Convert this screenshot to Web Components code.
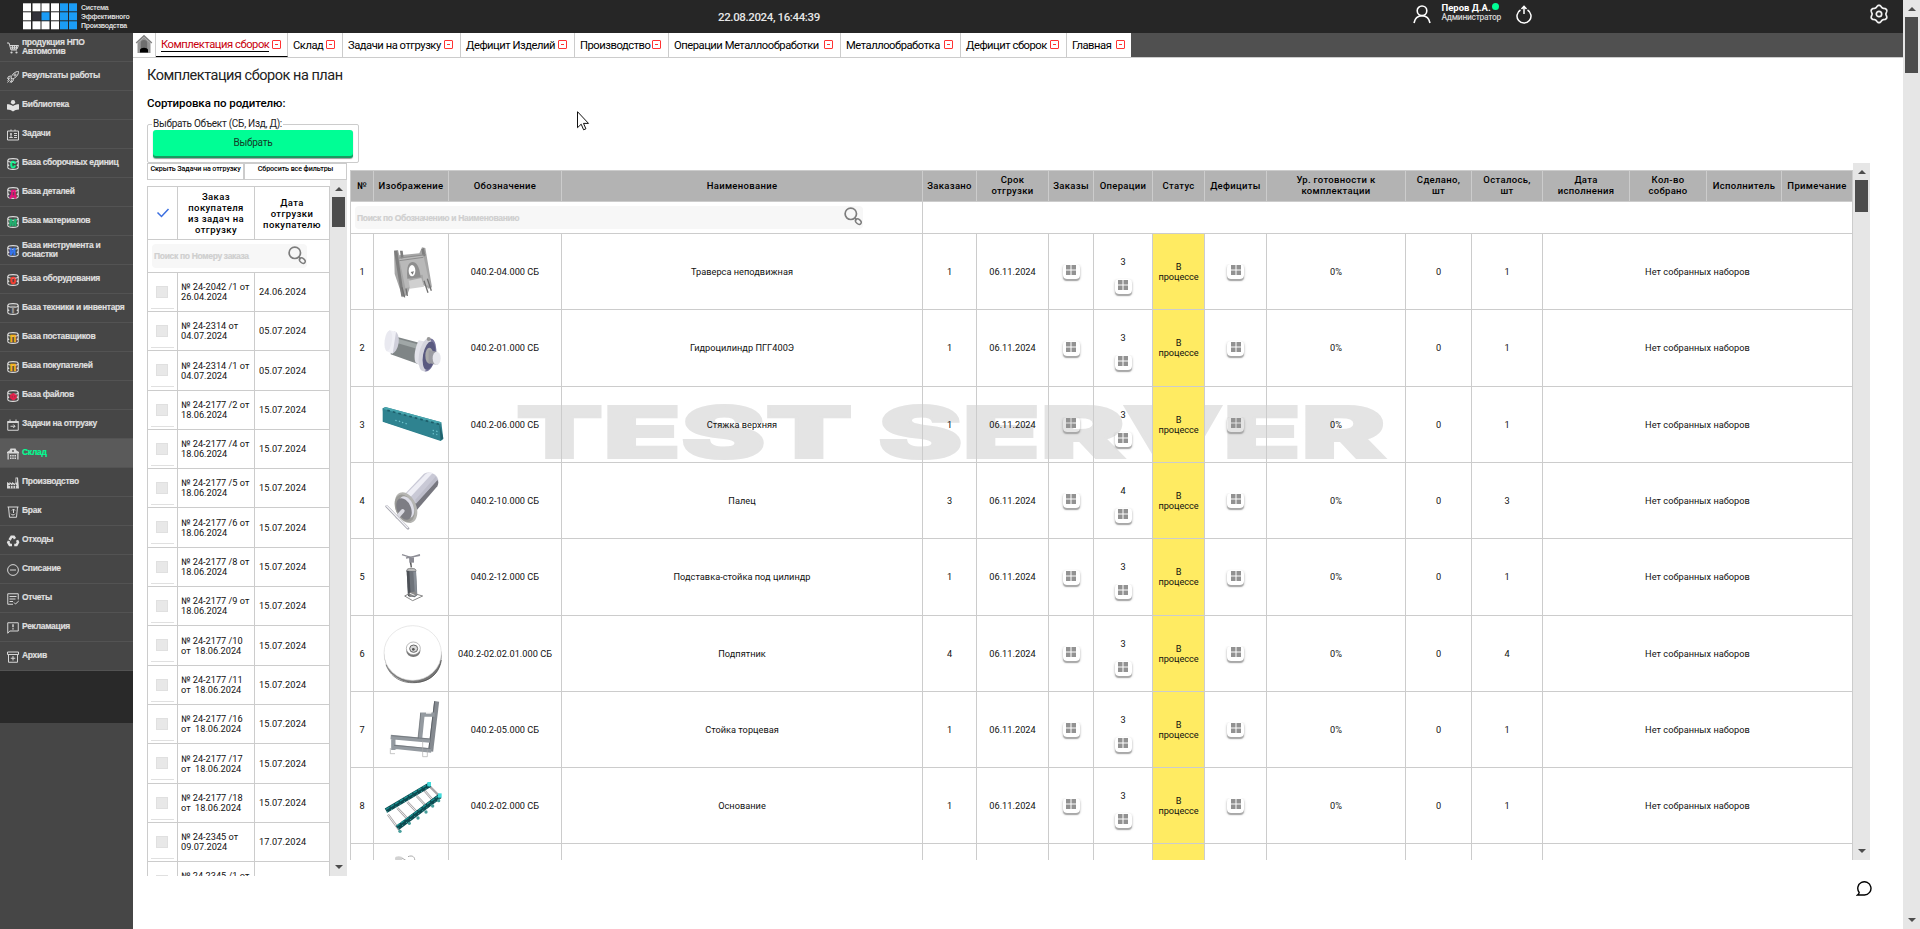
<!DOCTYPE html>
<html lang="ru">
<head>
<meta charset="utf-8">
<title>Комплектация сборок на план</title>
<style>
html,body{margin:0;padding:0;height:929px;overflow:hidden;background:#fff;font-family:Roboto,"Liberation Sans",sans-serif}
</style>
</head>
<body>
<erp-app></erp-app>
<script>
const define=(name,render)=>customElements.define(name,class extends HTMLElement{
  connectedCallback(){
    if(this.shadowRoot)return;
    this.attachShadow({mode:'open'}).innerHTML=render(this);
  }
});

/* ---------- icons ---------- */
const S='fill="none" stroke="#d6d6d6" stroke-width="2"';
const db=(c,l)=>`<g fill="none" stroke="#dcdcdc" stroke-width="2.2"><ellipse cx="12" cy="5" rx="10.4" ry="3.8"/><path d="M1.6 5v14c0 5 20.800 5 20.800 0V5M1.600 12c0 1.500 1.500 2.500 3 3M22.400 12c0 1.500-1.500 2.500-3 3"/></g><text x="12" y="19" font-family="Roboto,sans-serif" font-weight="900" font-size="17" text-anchor="middle" fill="${c}" stroke="${c}" stroke-width=".8">${l}</text>`;
const ICONS={
  cart:`<path ${S} d="M0 2h4l4 14h12M6 7h17l-3 7H8"/><path ${S} stroke-width="1.500" d="M7 10.500h14M11 7v7M15 7v7M19 7v7"/><circle cx="9" cy="21" r="2.200" fill="#d6d6d6"/><circle cx="19" cy="21" r="2.200" fill="#d6d6d6"/>`,
  rocket:`<path ${S} d="M8 14C10 6 16 1 23 1c0 7-5 13-13 15zM8 10L3 11l-2 4 6-1M13 15l-1 5-4 3 1-6"/><circle cx="16" cy="8" r="2.200" ${S} stroke-width="1.500"/><path ${S} d="M6 17l-5 6M4 16l-3 3M8 20l-2 3"/>`,
  reader:`<g fill="#e2e2e2"><circle cx="12" cy="4.500" r="4.300"/><path d="M12 12C9 9.500 5 8.500 0 8.500V19c5 0 9 1.500 12 4 3-2.500 7-4 12-4V8.500c-5 0-9 1-12 3.500z"/></g>`,
  tasks:`<path ${S} d="M1 4h22v18H1zM8 1v3M16 1v3"/><circle cx="8" cy="10" r="2" fill="#d6d6d6"/><path ${S} d="M4.500 17h7M14 9h6M14 13h6M14 17h6M8 11v5"/>`,
  dbS:db('#0ef596','С'),dbD:db('#e4127c','Д'),dbM:db('#21b573','М'),dbI:db('#3478f0','И'),dbO:db('#fb4030','О'),dbT:db('#9c9c9c','Т'),dbP:db('#f3b21b','П'),dbF:db('#e71e4b','Ф'),
  cal:`<path ${S} d="M1.500 5h21v17.500h-21zM6 1v4M18 1v4"/><path fill="#d6d6d6" d="M1 4h22v4H1z"/><path ${S} d="M7 14.500h9M12.500 11l3.500 3.500-3.500 3.500"/>`,
  ware:`<g fill="#d9d9d9"><path d="M0 8l5-3 2-4h10l2 4 5 3v3H0z"/><path d="M1 11h2.500v12H1zM20.500 11H23v12h-2.500zM6 14h3v3H6zM10.500 14h3v3h-3zM15 14h3v3h-3zM6 19h3v3H6zM10.500 19h3v3h-3zM15 19h3v3h-3z"/></g><circle cx="12" cy="6" r="2" fill="#5a5a5a"/>`,
  factory:`<path fill="#d6d6d6" d="M0 23V10l5 3v-3l5 3v-3l5 3h2V1h5l2 22z"/><path stroke="#464646" stroke-width="1.600" d="M3 17h16M7 14v9M12 14v9M17 14v9M19 3v8" fill="none"/>`,
  scrap:`<path ${S} stroke-width="2.400" d="M1 2h22M3 2l2 20.500h14L21 2"/><path ${S} d="M8 15.500a4.500 4.500 0 0 0 8 0M13 6v8M10 9l3-3 3 3"/>`,
  recycle:`<g fill="none" stroke="#e0e0e0" stroke-width="5"><path d="M5 10l4-6.500h4.500l2.500 4M20 10.500l2 4-3 5.500h-4.500M10 20H5.500L2.500 15l1.500-3"/></g>`,
  minus:`<circle cx="12" cy="12" r="10.800" ${S}/><path ${S} stroke-width="2.400" d="M6 12h12"/>`,
  report:`<path ${S} d="M22.500 13V1.500h-21v21H12M5 7h14M5 12h12M5 17h7M14 19l3 3 6.500-6"/>`,
  claim:`<path ${S} d="M1.500 22.500v-21h21v16.500h-17z"/><path stroke="#e6e6e6" stroke-width="2.600" d="M12 4.500v6M12 12.500v2.500"/>`,
  archive:`<path ${S} d="M1 2h22v5H1zM3 7v15.500h18V7"/><path ${S} stroke-width="2.400" d="M12 10v9M7.500 14.500h9"/>`
};
define('nav-icon',e=>`<style>:host{display:block;width:12px;height:12px}svg{display:block;overflow:visible}</style><svg width="12" height="12" viewBox="0 0 24 24">${ICONS[e.getAttribute('name')]}</svg>`);

define('search-icon',()=>`<style>:host{display:block;width:18px;height:19px}svg{display:block}</style>
<svg width="18" height="19" viewBox="0 0 18 19" fill="none" stroke="#7d7d7d"><circle cx="6.800" cy="6.800" r="5.700" stroke-width="1.700"/><path d="M10.700 10.800l2 2.400" stroke-width="1.700"/><ellipse cx="14.300" cy="14.600" rx="3.200" ry="2.200" transform="rotate(40 14.300 14.600)" stroke-width="1.500"/></svg>`);

define('scroll-bar',e=>`<style>:host{display:flex;flex-direction:column;align-items:center;width:17px;background:#e6e6e6;box-sizing:border-box}
i{display:block;border:solid transparent;border-width:0 4px}.u{border-bottom:4px solid #4d4d4d;margin:7px 0 6px}.d{border-top:4px solid #4d4d4d;margin:auto 0 7px}
.t{width:13px;background:#4d4d4d;height:${e.getAttribute('thumb')}px}</style><i class="u"></i><div class="t"></div><i class="d"></i>`);

/* ---------- header ---------- */
define('brand-logo',()=>{
  const xs=[0,9.5,18.5,28,37,46],W='#fff',B='#1b9cf5';
  const rows=[[W,W,W,W,B,B],[W,'#33333b',B,W,B,B],[W,W,W,W,B,B]];
  return `<style>:host{display:flex;align-items:center;padding:0 0 1px 23px}svg{display:block}
  div{margin-left:4px;font:bold 7px/9px "Liberation Sans",sans-serif;color:#dadada;letter-spacing:-.3px;white-space:nowrap}</style>
  <svg width="54" height="27">${rows.map((r,y)=>r.map((c,x)=>`<rect x="${xs[x]}" y="${y*9+.300}" width="8" height="8" fill="${c}"/>`).join('')).join('')}</svg><div>Система<br>Эффективного<br>Производства</div>`;
});
define('user-badge',()=>`<style>:host{display:flex;align-items:flex-start;height:33px;color:#fff}svg{display:block;margin-top:5px}
.t{margin:3px 16px 0 11px;width:58px;white-space:nowrap;font:bold 9.500px/10px Roboto,sans-serif;position:relative;letter-spacing:0}
.t small{display:block;font:500 8.500px/9px Roboto,sans-serif;color:#d2d2d2;letter-spacing:-.3px}
.t i{position:absolute;left:50px;top:0;width:7px;height:7px;border-radius:50%;background:#00fe95}</style>
<svg width="18" height="19" viewBox="0 0 18 19" fill="none" stroke="#fff" stroke-width="1.600"><circle cx="9" cy="5.800" r="4.800"/><path d="M1 18c.8-4.500 4-7.300 8-7.300s7.200 2.800 8 7.300"/></svg>
<div class="t">Перов Д.А.<small>Администратор</small><i></i></div>
<svg width="16" height="19" viewBox="0 0 16 19" fill="none" stroke="#fff" stroke-width="1.500"><path d="M4.500 5A7 7 0 1 0 11.500 5M8 9V1.500M5.500 4L8 1.300 10.500 4"/></svg>`);
define('app-header',()=>{
  const p=[];for(let i=0;i<96;i++){const a=i/96*Math.PI*2,r=7.8+.9*Math.cos(a*6);p.push((10+r*Math.sin(a)).toFixed(2)+','+(10-r*Math.cos(a)).toFixed(2))}
  return `<style>:host{display:grid;grid-template-columns:133px 1fr 1fr;height:33px;background:#262626;font-family:Roboto,sans-serif}
  .time{justify-self:start;margin-left:585px;font:500 11.500px/34px Roboto,sans-serif;color:#e6e6e6;white-space:nowrap;letter-spacing:-.38px}
  .r{display:flex;justify-content:space-between;padding:0 14px 0 394.500px}.g{margin-top:3.500px}</style>
  <brand-logo></brand-logo><div class="time">22.08.2024, 16:44:39</div>
  <div class="r"><user-badge></user-badge><svg class="g" width="20" height="20" viewBox="0 0 20 20" fill="none" stroke="#f2f2f2" stroke-width="1.700"><polygon points="${p.join(' ')}" stroke-linejoin="round"/><circle cx="10" cy="10" r="2.700"/></svg></div>`;
});

/* ---------- side navigation ---------- */
define('nav-item',e=>`<style>:host{display:flex;align-items:center;height:29px;box-sizing:border-box;padding:0 0 0 7px;background:#464646;border-bottom:1px solid #535353;color:#dedede}
:host([active]){background:#5a5a5a;color:#00fe95}
span{margin:0 0 1px 3px;font:bold 8.500px/9px "Liberation Sans",sans-serif;letter-spacing:-.3px;-webkit-text-stroke:.2px currentColor;white-space:pre-line}nav-icon{margin-top:1px}</style>
<nav-icon name="${e.getAttribute('icon')}"></nav-icon><span><slot></slot></span>`);
const NAV=[['cart','продукция НПО\nАвтомотив'],['rocket','Результаты работы'],['reader','Библиотека'],['tasks','Задачи'],['dbS','База сборочных единиц'],['dbD','База деталей'],['dbM','База материалов'],['dbI','База инструмента и\nоснастки'],['dbO','База оборудования'],['dbT','База техники и инвентаря'],['dbP','База поставщиков'],['dbP','База покупателей'],['dbF','База файлов'],['cal','Задачи на отгрузку'],['ware','Склад',1],['factory','Производство'],['scrap','Брак'],['recycle','Отходы'],['minus','Списание'],['report','Отчеты'],['claim','Рекламация'],['archive','Архив']];
define('side-nav',()=>`<style>:host{display:block;width:133px;background:#464646}.gap{height:52px;background:#292929}</style>
${NAV.map(n=>`<nav-item icon="${n[0]}"${n[2]?' active':''}>${n[1]}</nav-item>`).join('')}<div class="gap"></div>`);

/* ---------- tabs ---------- */
define('tab-item',e=>`<style>:host{display:flex;align-items:center;box-sizing:border-box;width:${e.getAttribute('w')}px;height:24px;background:#fff;border-right:1px solid #ccc;padding-left:5px;white-space:nowrap;font:400 11.200px/13px Roboto,sans-serif;color:#000;letter-spacing:-.46px}
:host([active]){color:#c8000c;border-bottom:1px solid #000}:host([active]) span{border-bottom:1px solid #000}
:host([last]){border-right:0}
i{flex:none;width:7px;height:7px;border:1px solid #f33;border-radius:1px;margin:-1px 7px 0 auto;display:flex;align-items:center;justify-content:center}i::after{content:"";width:3px;height:1px;background:#f33}:host([active]) i,:host([last]) i{margin-right:6px}</style><span><slot></slot></span><i></i>`);
define('tab-bar',()=>`<style>:host{display:flex;height:24px;background:#505050;border-bottom:1px solid #ccc}
.home{width:22px;background:#fff;border-right:1px solid #ccc;padding-top:1px}svg{display:block;margin-left:2px}</style>
<div class="home"><svg width="18" height="20" viewBox="0 0 18 20"><path d="M9 .8L17.300 8.500l-1 1L9 3 1.700 9.500l-1-1z" fill="#808080"/><path d="M9 3l6.500 6v10h-13V9z" fill="#949494"/><path d="M9 6a3.200 3.200 0 0 1 3.200 3.200V14H5.800V9.200A3.200 3.200 0 0 1 9 6z" fill="#6e6e6e"/><path d="M5 18.500V16c0-3 8-3 8 0v2.500z" fill="#000"/></svg></div>
${[['Комплектация сборок',132,'active'],['Склад',55],['Задачи на отгрузку',118],['Дефицит Изделий',114],['Производство',94],['Операции Металлообработки',172],['Металлообработка',120],['Дефицит сборок',106],['Главная',64,'last']].map(t=>`<tab-item w="${t[1]}" ${t[2]||''}>${t[0]}</tab-item>`).join('')}`);

/* ---------- orders panel ---------- */
define('pick-box',()=>`<style>:host{display:block;width:212px;height:40px;position:relative;font-family:Roboto,sans-serif}
.f{box-sizing:border-box;height:39px;border:1px solid #ccc;border-radius:2px;padding:5px}
.l{position:absolute;left:5px;top:-6px;padding:0 1px;background:#fff;font-size:10px;line-height:11px;white-space:nowrap;letter-spacing:-.27px;color:#222}
button{display:block;width:200px;height:28px;border:0;border-radius:3px;background:#00fe95;box-shadow:inset 0 -2px #189a61,0 1px 1px #999;font:400 10px/24px Roboto,sans-serif;padding:0 0 2px;color:#143a28;letter-spacing:-.25px}</style>
<div class="f"><button>Выбрать</button></div><div class="l">Выбрать Объект (СБ, Изд, Д):</div>`);
define('search-box',e=>`<style>:host{display:flex;align-items:center;justify-content:space-between;box-sizing:border-box;background:#f7f7f7;border-radius:4px;padding:0 1px 0 2px}
span{font:bold 8.500px/10px "Liberation Sans",sans-serif;color:#cfcfcf;white-space:nowrap;letter-spacing:-.32px;-webkit-text-stroke:.2px currentColor}search-icon{margin-top:-2px}</style><span><slot></slot></span><search-icon></search-icon>`);
const ORDERS=[['№ 24-2042 /1 от\n26.04.2024','24.06.2024'],['№ 24-2314 от\n04.07.2024','05.07.2024'],['№ 24-2314 /1 от\n04.07.2024','05.07.2024'],['№ 24-2177 /2 от\n18.06.2024'],['№ 24-2177 /4 от\n18.06.2024'],['№ 24-2177 /5 от\n18.06.2024'],['№ 24-2177 /6 от\n18.06.2024'],['№ 24-2177 /8 от\n18.06.2024'],['№ 24-2177 /9 от\n18.06.2024'],['№ 24-2177 /10\nот  18.06.2024'],['№ 24-2177 /11\nот  18.06.2024'],['№ 24-2177 /16\nот  18.06.2024'],['№ 24-2177 /17\nот  18.06.2024'],['№ 24-2177 /18\nот  18.06.2024'],['№ 24-2345 от\n09.07.2024','17.07.2024'],['№ 24-2345 /1 от\n09.07.2024','17.07.2024']];
const OH=[39,39,40,39,39,39,40,39,39,40,39,39,40,39,39,39];
define('orders-table',()=>`<style>:host{display:block;width:183px;height:690px;overflow:hidden;font-family:Roboto,sans-serif}
.r{display:grid;grid-template-columns:31px 77px 75px;grid-template-rows:100%}.r>*{box-sizing:border-box;border:solid #ccc;border-width:0 1px 1px 0;display:flex;align-items:center}.r>:first-child{border-left-width:1px}
.h{height:54px;font:500 9.500px/11px Roboto,sans-serif;letter-spacing:.4px;text-align:center}.h>*{border-top-width:1px;justify-content:center}
.s{box-sizing:border-box;height:33px;border:solid #ccc;border-width:0 1px 1px;padding:4px 0 0 4px}search-box{width:155px;height:24px}
.c{flex-direction:column;padding-top:13px}.c i{width:10px;height:10px;margin-left:-1px;background:#e8e8e8;border:1px solid #e0e0e0}.c b{width:23px;height:1px;background:#e0e0e0;margin:10px 0 0}
.o,.d{font-size:9.200px;line-height:10px;white-space:pre;color:#111}.r>.o{padding:0 0 0 3px}.r>.d{padding:0 0 0 4px;letter-spacing:.1px}</style>
<div class="r h"><div><svg width="14" height="12" viewBox="0 0 14 12"><path d="M1.500 5.500l4 4L12.500 2" fill="none" stroke="#3b6fe0" stroke-width="1.500"/></svg></div><div>Заказ<br>покупателя<br>из задач на<br>отгрузку</div><div>Дата<br>отгрузки<br>покупателю</div></div>
<div class="s"><search-box>Поиск по Номеру заказа</search-box></div>
${ORDERS.map((o,i)=>`<div class="r" style="height:${OH[i]}px"><div class="c"><i></i><b></b></div><div class="o">${o[0]}</div><div class="d">${o[1]||'15.07.2024'}</div></div>`).join('')}`);
define('orders-panel',()=>`<style>:host{display:block;width:200px;font-family:Roboto,sans-serif}
.b{display:flex;height:17px}.b button{box-sizing:border-box;height:17px;width:97px;border:1px solid #ccc;background:#fff;padding:0;margin:0;font:500 7.200px/9px Roboto,sans-serif;letter-spacing:-.12px;color:#000;white-space:nowrap;display:flex;justify-content:center;align-items:flex-start}.b button+button{width:103px;border-left-width:1px}
.p{display:flex;height:696px}orders-table{margin-top:6px}</style>
<div class="b"><button>Скрыть Задачи на отгрузку</button><button>Сбросить все фильтры</button></div>
<div class="p"><orders-table></orders-table><scroll-bar thumb="30"></scroll-bar></div>`);

/* ---------- part pictures: drawn in a 225×228 box ---------- */
const ART=[
`<path d="M60 50l12-2 4 16 60-6 8-18 10 2 20 118-10 4-12-10-44 6-8 22-14 8L62 120z" fill="#a6a6a6"/><path d="M60 50l10 0 20 136-8 2zM78 50l8 0 4 30-8 2zM142 46l8-4 4 24-8 2z" fill="#7e7e7e"/><path d="M76 74l72-10 20 90-18 2-4-34-40 6 4 32-16 2z" fill="#b9b9b9"/><path d="M76 72l80-10M76 80l72-10" stroke="#8d8d8d" stroke-width="3" fill="none"/><path d="M100 134c-4-40 6-50 16-50s20 10 24 46z" fill="#8e8e8e"/><ellipse cx="114" cy="110" rx="10" ry="17" fill="#fff"/><path d="M110 114l10-2-4 10z" fill="#777"/><path d="M104 140l38-8 8 26-42 6z" fill="#d0d0d0"/><path d="M84 160l8 30M96 164l4 22M150 140l12 36M160 134l12 36" stroke="#707070" stroke-width="4" fill="none"/>`,
`<path d="M56 74l96 26-18 60-84-30z" fill="#7f8586"/><path d="M60 80l88 24-4 14-88-26z" fill="#a0a7a7"/><ellipse cx="58" cy="94" rx="16" ry="33" transform="rotate(8 58 94)" fill="#cfcfda"/><path d="M46 57l20 6-10 65-20-8z" fill="#f0f0f6"/><ellipse cx="43" cy="89" rx="11" ry="31" transform="rotate(8 43 89)" fill="#e9e9f0"/><path d="M134 88l30 6-14 80-26-20c-6-20 0-44 10-66z" fill="#e3e3ea"/><ellipse cx="162" cy="132" rx="24" ry="50" transform="rotate(10 162 132)" fill="#77759c"/><ellipse cx="155" cy="132" rx="20" ry="49" transform="rotate(10 155 132)" fill="#d4d4dd"/><ellipse cx="165" cy="134" rx="18" ry="43" transform="rotate(10 165 134)" fill="#5a5a80"/><ellipse cx="166" cy="134" rx="12" ry="24" fill="#aaa"/><path d="M164 118l26 4v40l-26-6z" fill="#9b9ba2"/><ellipse cx="188" cy="142" rx="12" ry="20" fill="#e6e6ec"/><circle cx="164" cy="84" r="6" fill="#999"/>`,
`<path d="M26 64l8-4 168 46 6 50-8 6-174-58z" fill="#2c7f8b"/><path d="M26 64l170 48 4 48-170-56z" fill="#2f8390"/><path d="M34 60l168 46-4 6L28 66z" fill="#48a5ae"/><path d="M40 70l156 42" stroke="#1d5e6a" stroke-width="5" stroke-dasharray="8 9" fill="none"/><path d="M64 100l16 4M84 106l16 5M176 130l20 5M176 140l14 3" stroke="#6dc3cc" stroke-width="4" stroke-dasharray="4 7"/><path d="M196 110l12 44-8 6z" fill="#22626c"/>`,
`<path d="M84 102l66-70c20-12 50 6 42 32l-64 76z" fill="#c9c9d6"/><path d="M90 100l66-68c8-4 14-4 20-2l-70 76z" fill="#eeeef5"/><path d="M118 128l72-78c4 6 3 14 0 20l-64 74z" fill="#77777f"/><path d="M124 110l62-70 4 12-64 70z" fill="#bdbdca"/><ellipse cx="96" cy="134" rx="31" ry="48" transform="rotate(-22 96 134)" fill="#b5b5b2"/><ellipse cx="92" cy="136" rx="27" ry="43" transform="rotate(-22 92 136)" fill="#9b9b98"/><ellipse cx="98" cy="132" rx="20" ry="34" transform="rotate(-22 98 132)" fill="#dcdce6"/><ellipse cx="90" cy="138" rx="21" ry="34" transform="rotate(-22 90 138)" fill="#7d7d84"/><path d="M70 162l16-18" stroke="#dadae2" stroke-width="12" stroke-linecap="round"/><path d="M38 130L102 196" stroke="#a5a5ae" stroke-width="8" stroke-linecap="round"/><path d="M38 129L101 194" stroke="#f4f4f8" stroke-width="4" stroke-linecap="round"/>`,
`<path d="M84 44l26 8 28-8M96 54l42-8M108 54l2 20" stroke="#8e8e96" stroke-width="4" fill="none"/><path d="M106 52h14v16h-14z" fill="#8a8a92"/><path d="M110 68l2 14" stroke="#555" stroke-width="4"/><ellipse cx="112" cy="92" rx="14" ry="7" fill="#bbb" stroke="#666" stroke-width="2"/><path d="M98 92l28 2 4 72-8 6-20-4z" fill="#6e737a"/><path d="M98 92l8 2 4 76-8-2z" fill="#4c5056"/><path d="M118 96l8-1 3 70-6 4z" fill="#888e96"/><path d="M92 168l20-10 34 10-30 14z" fill="none" stroke="#888" stroke-width="3"/><path d="M106 158l20-4v12l-20 6z" fill="#888"/><path d="M108 160l14 6" stroke="#eee" stroke-width="3"/>`,
`<path d="M30 116c4 50 40 84 92 84 50 0 80-34 81-80l-1-16c-6 44-40 72-80 72-50 0-84-30-92-76z" fill="#777"/><path d="M36 146c18 46 58 60 104 52 38-8 58-36 62-66" fill="none" stroke="#444" stroke-width="2"/><ellipse cx="116" cy="111" rx="86" ry="82" fill="#fff" stroke="#dcdcdc" stroke-width="2"/><ellipse cx="118" cy="105" rx="21" ry="18" fill="#777"/><ellipse cx="118" cy="97" rx="21" ry="19" fill="#fff" stroke="#999" stroke-width="2"/><ellipse cx="119" cy="98" rx="12" ry="11" fill="#d8d8d8" stroke="#666" stroke-width="3"/><circle cx="118" cy="100" r="4" fill="#555"/>`,
`<g fill="none" stroke-linejoin="miter"><path d="M188 28L170 178" stroke="#858a90" stroke-width="15"/><path d="M182 28L164 176" stroke="#5d6268" stroke-width="3"/><path d="M138 68h44M146 64L138 142M50 135l118 11M58 130v44M58 164l114 12" stroke="#949aa0" stroke-width="13"/><path d="M52 131l116 10M60 160l110 10M140 64L132 140" stroke="#666b70" stroke-width="2"/><path d="M156 62h16" stroke="#f5f5f5" stroke-width="6"/><path d="M49 168v17h14M146 146v48h14v-22" stroke="#aaa" stroke-width="2"/></g>`,
`<g fill="none"><g stroke="#a9a5a8" stroke-width="7"><path d="M42 140l34 46M70 120l32 34M100 102l34 36M128 84l32 34M150 66l28 32M164 52l32 32"/></g><g stroke="#eee" stroke-width="3"><path d="M42 140l34 46M70 120l32 34M100 102l34 36M128 84l32 34M150 66l28 32"/></g><path d="M36 128L168 50M70 180L198 84" stroke="#0b4a50" stroke-width="15"/><path d="M36 124L166 46M68 174L198 80" stroke="#1d9090" stroke-width="4" stroke-dasharray="12 4"/><path d="M38 133L168 55M72 182L198 90" stroke="#45b5ac" stroke-width="2.500" stroke-dasharray="4 11"/></g><g fill="#41dada"><rect x="160" y="42" width="11" height="13"/><rect x="192" y="76" width="11" height="13"/></g><g fill="#479e9b"><circle cx="106" cy="166" r="5"/><circle cx="132" cy="150" r="5"/><circle cx="156" cy="132" r="5"/><circle cx="176" cy="114" r="5"/><circle cx="194" cy="98" r="5"/><circle cx="78" cy="190" r="5"/></g>`,
`<ellipse cx="74" cy="44" rx="11" ry="7" fill="#d2d2d2"/><path d="M84 42l16 10" stroke="#aaa" stroke-width="3"/><path d="M102 38c14-6 22 2 20 14" fill="none" stroke="#aaa" stroke-width="3"/>`];
define('part-image',e=>`<style>:host{display:block;flex:none;width:74px;height:75px}svg{display:block}</style><svg width="74" height="75" viewBox="0 0 222 225">${ART[e.getAttribute('part')]}</svg>`);

/* ---------- assemblies table ---------- */
define('grid-button',()=>`<style>:host{display:flex;justify-content:center;flex:none;width:17px;height:15px;border-radius:4px;box-shadow:0 2px 1px #a8a8a8,0 1px 3px rgba(0,0,0,.25);box-sizing:border-box;padding-top:1px;clip-path:inset(0 -3px -5px -3px)}
svg{display:block}</style><svg width="10" height="10" fill="#929292"><path d="M0 0h4.500v4.500H0zM5.500 0H10v4.500H5.500zM0 5.500h4.500V10H0zM5.500 5.500H10V10H5.500z"/></svg>`);
const ROWS=[['040.2-04.000 СБ','Траверса неподвижная',1,3],['040.2-01.000 СБ','Гидроцилиндр ПГГ400Э',1,3],['040.2-06.000 СБ','Стяжка верхняя',1,3],['040.2-10.000 СБ','Палец',3,4],['040.2-12.000 СБ','Подставка-стойка под цилиндр',1,3],['040.2-02.02.01.000 СБ','Подпятник',4,3],['040.2-05.000 СБ','Стойка торцевая',1,3],['040.2-02.000 СБ','Основание',1,3]];
const RH=[76,77,76,76,77,76,76,76];
define('assembly-table',()=>`<style>:host{display:block;width:1503px;height:690px;overflow:hidden;font-family:Roboto,sans-serif;position:relative}
.wm{position:absolute;left:166px;top:230px;z-index:-1;overflow:visible}
.r{display:grid;grid-template-rows:100%;grid-template-columns:24px 75px 113px 361px 54px 72px 45px 59px 52px 62px 139px 66px 71px 310px}
.r>*{box-sizing:border-box;border:solid #ccc;border-width:0 1px 1px 0;display:flex;align-items:center;justify-content:center;text-align:center}.r>:first-child{border-left-width:1px}
.h{grid-template-columns:24px 75px 113px 361px 54px 72px 45px 59px 52px 62px 139px 66px 71px 87px 77px 75px 71px;height:32px;font:500 9.500px/11px Roboto,sans-serif;letter-spacing:.33px}.h>*{background:#b3b3b3;border-top-width:1px;padding-bottom:2px}
.s{height:32px;grid-template-columns:573px 930px}.s>:first-child{justify-content:flex-start;padding-left:4px}search-box{width:508px;height:23px}
.b{font-size:9.200px;line-height:10px;color:#111;letter-spacing:.03px}
.y{background:#ffeb62;letter-spacing:-.05px}.b>.op{flex-direction:column;padding-top:7px}.op span{margin-bottom:12px}</style>
<svg class="wm" width="880" height="64"><text x="0" y="58" font-family="Inter,sans-serif" font-weight="900" font-size="71" fill="#e4e4e4" stroke="#e4e4e4" stroke-width="2" textLength="870" lengthAdjust="spacingAndGlyphs">TEST SERVER</text></svg>
<div class="r h">${['№','Изображение','Обозначение','Наименование','Заказано','Срок<br>отгрузки','Заказы','Операции','Статус','Дефициты','Ур. готовности к<br>комплектации','Сделано,<br>шт','Осталось,<br>шт','Дата<br>исполнения','Кол-во<br>собрано','Исполнитель','Примечание'].map(t=>`<div>${t}</div>`).join('')}</div>
<div class="r s"><div><search-box>Поиск по Обозначению и Наименованию</search-box></div><div></div></div>
${ROWS.map((r,i)=>`<div class="r b" style="height:${RH[i]}px"><div>${i+1}</div><div><part-image part="${i}"></part-image></div><div>${r[0]}</div><div>${r[1]}</div><div>${r[2]}</div><div>06.11.2024</div><div><grid-button></grid-button></div><div class="op"><span>${r[3]}</span><grid-button></grid-button></div><div class="y">В<br>процессе</div><div><grid-button></grid-button></div><div>0%</div><div>0</div><div>${r[2]}</div><div>Нет собранных наборов</div></div>`).join('')}
<div class="r b" style="height:76px"><div></div><div><part-image part="8"></part-image></div><div></div><div></div><div></div><div></div><div></div><div></div><div class="y"></div><div></div><div></div><div></div><div></div><div></div></div>`);

define('kit-page',()=>`<style>:host{display:block;position:relative;z-index:0;padding:9px 0 0 14px;font-family:Roboto,sans-serif}
h1{margin:0;font:400 14.500px/18px Roboto,sans-serif;color:#222;white-space:nowrap;letter-spacing:-.47px;height:18px}
h2{margin:11px 0 0;font:500 11.500px/14px Roboto,sans-serif;height:14px;letter-spacing:-.07px}pick-box{margin-top:14px}
.p{display:flex;gap:3px;margin-top:-1px}.m{display:flex;height:697px}assembly-table{margin-top:7px}
.chat{position:absolute;left:1723px;top:822px}.cur{position:absolute;left:444px;top:53px}</style>
<h1>Комплектация сборок на план</h1><h2>Сортировка по родителю:</h2><pick-box></pick-box>
<div class="p"><orders-panel></orders-panel><div class="m"><assembly-table></assembly-table><scroll-bar thumb="32"></scroll-bar></div></div>
<svg class="chat" width="16" height="17" viewBox="0 0 16 17"><path d="M3.200 12.500A6.600 6.600 0 1 1 8.500 15H1.500q1.500-1 1.700-2.500z" fill="#fff" stroke="#000" stroke-width="1.400"/></svg>
<svg class="cur" width="13" height="20" viewBox="0 0 13 20"><path d="M.5 .7v16l3.700-3.500 2.400 5.600 2.300-1-2.400-5.400h5z" fill="#fff" stroke="#111" stroke-width="1"/></svg>`);

define('erp-app',()=>`<style>:host{display:grid;grid-template:33px 896px/133px 1770px 17px}app-header{grid-column:1/3}scroll-bar{grid-column:3;grid-row:1/3}main{min-width:0}</style>
<app-header></app-header><side-nav></side-nav><main><tab-bar></tab-bar><kit-page></kit-page></main><scroll-bar thumb="56"></scroll-bar>`);
</script>
</body>
</html>
